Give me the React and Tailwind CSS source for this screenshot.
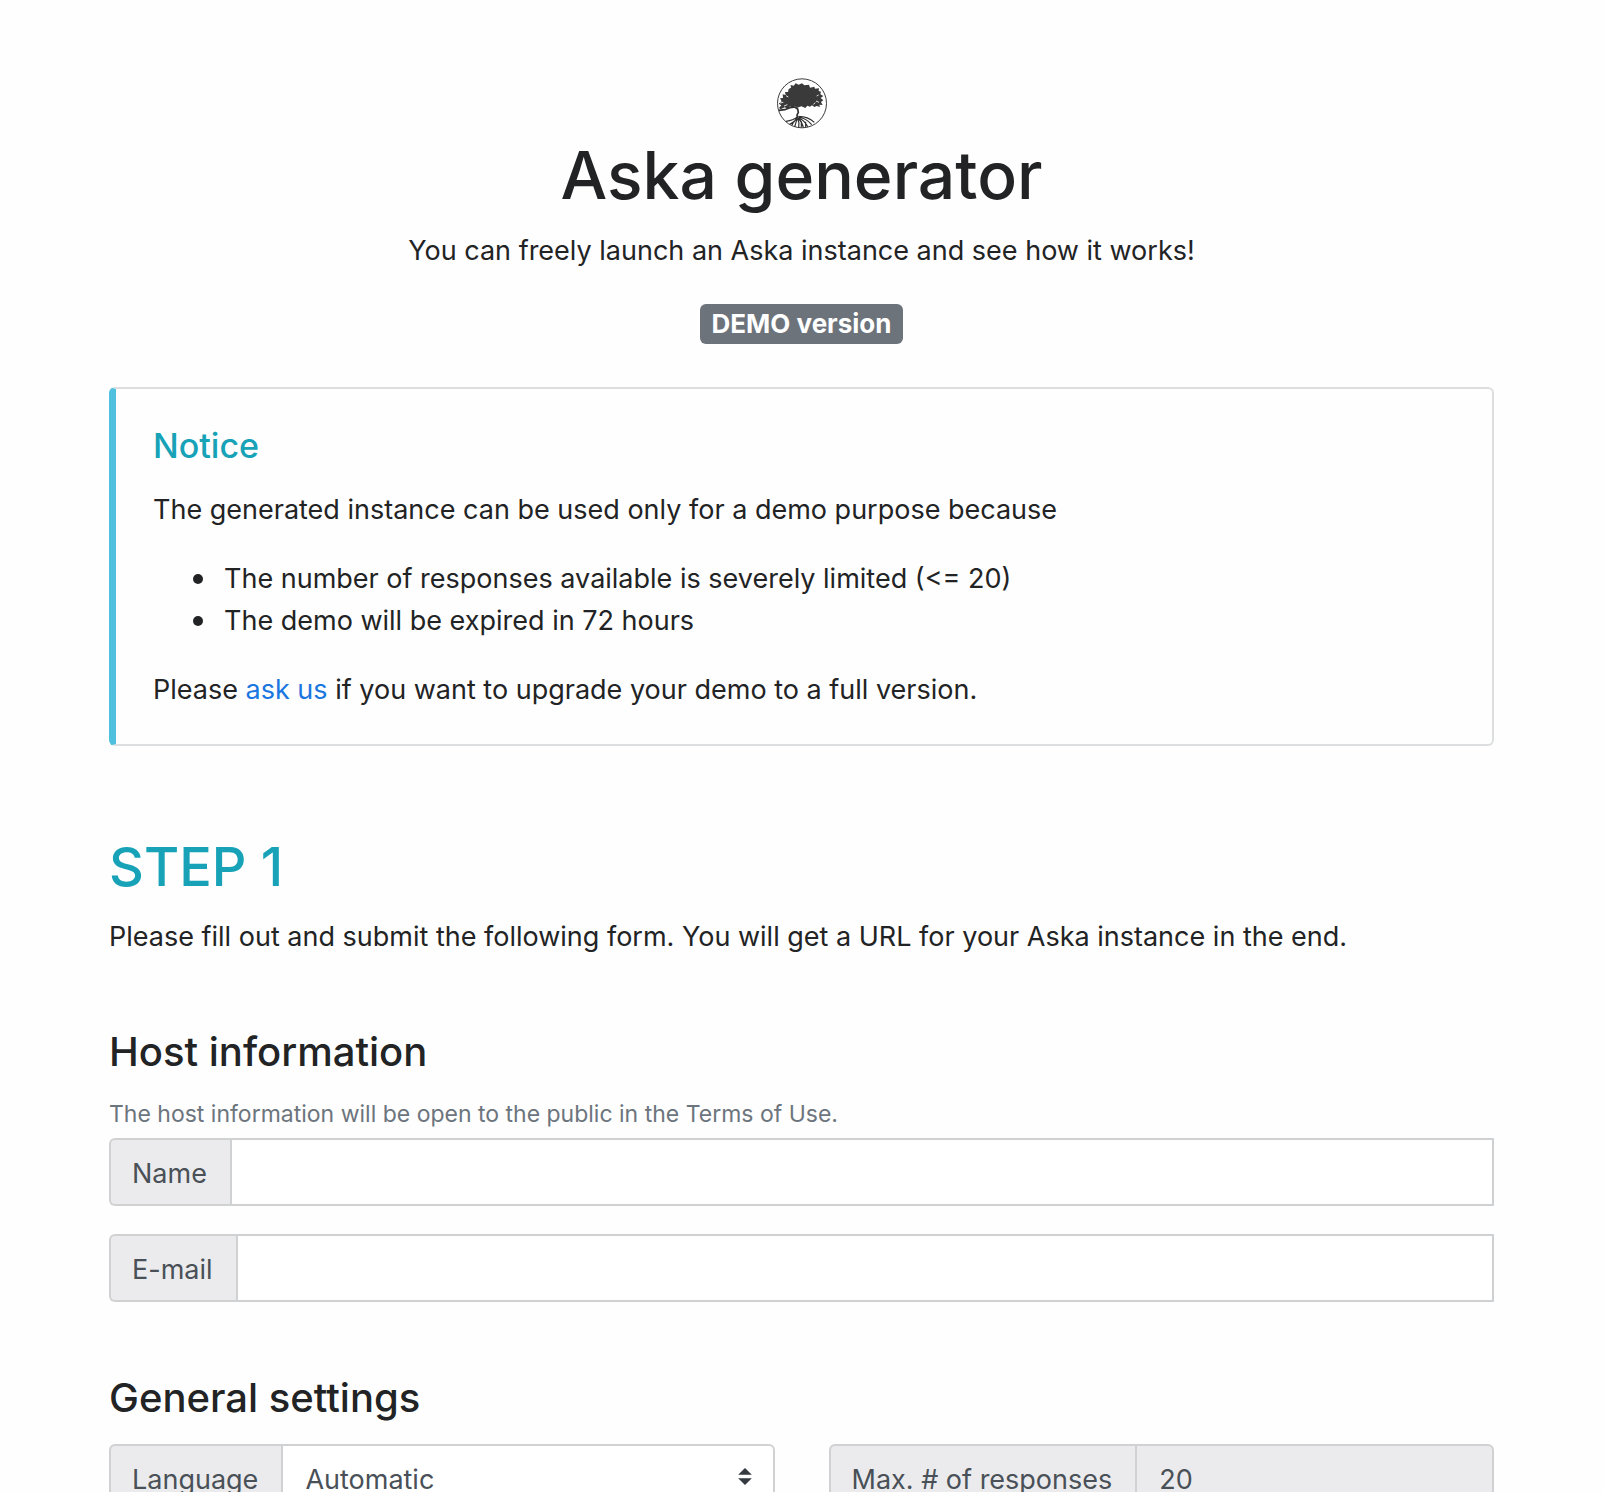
import React from "react";

function TreeLogo() {
  return (
    <svg viewBox="48 34 156 156" className="size-[52px]" role="img" aria-label="Aska logo">
      <circle cx="126" cy="113" r="73.5" fill="#fff" stroke="#3c3c3c" strokeWidth="3" />
      <path
        fill="#3a3a3a"
        d="M86 70L93 66 92 58 101 60 107 53 116 57 126 53 133 59 147 57 150 66 163 63 165 69 177 68 176 76 183 78 181 86 190 91 182 97 190 104 183 109 188 118 178 117 180 124 170 121 163 124 156 119 150 123 142 120 136 127 124 122 112 126 104 121 98 128 90 122 84 130 74 125 62 131 57 127 64 119 56 114 65 107 60 98 69 97 68 86 77 88 75 79 84 79z"
      />
      <path
        fill="none"
        stroke="#fff"
        strokeWidth="2.5"
        d="M60 112l10-2M72 121l10-4M168 106l9 4M160 116l6-5M78 90l7 4M176 88l-6 3"
      />
      <path
        fill="none"
        stroke="#2f2f2f"
        strokeWidth="5"
        strokeLinejoin="round"
        d="M57 134L74 132 90 126 104 124 113 130 115 140 111 148 113 158"
      />
      <path
        fill="none"
        stroke="#2f2f2f"
        strokeWidth="3.5"
        d="M112 154Q100 164 78 167M111 157Q104 170 89 176M112 158Q107 172 104 184M113 158Q119 172 116 186M114 157Q126 168 130 186M115 156Q134 164 143 183M115 154Q140 158 155 177M115 152Q144 152 163 170M102 166L96 179M124 167L124 185M137 168L137 184"
      />
    </svg>
  );
}

const addon =
  "flex shrink-0 items-center rounded-l-md border-2 border-r-0 border-[#d0d1d3] bg-[#ebebed] pt-1 pr-[23px] pl-[21px] text-[#495057]";
const field = "min-w-0 flex-1 border-2 border-[#d0d1d3] px-[22px] pt-1 text-[#495057] outline-none";
const bullet =
  "flex items-center gap-[21px] before:size-[10px] before:shrink-0 before:rounded-full before:bg-[#222324]";

function TextField({ id, label, type }) {
  return (
    <div className="flex h-[68px]">
      <label htmlFor={id} className={addon}>
        {label}
      </label>
      <input id={id} type={type} className={field + " bg-white"} />
    </div>
  );
}

export default function App() {
  return (
    <main className="bg-[#fefefe] pt-[77px] pr-[110px] pl-[109px] font-['Inter',sans-serif] text-[27px] leading-[42px] text-[#222324]">
      <header className="flex flex-col items-center text-center">
        <TreeLogo />
        <h1 className="mt-1 text-[66px] leading-[84px] font-medium">Aska generator</h1>
        <p className="mt-[13px]">You can freely launch an Aska instance and see how it works!</p>
        <span className="mt-8 rounded-md bg-[#6c737b] px-3 text-[26px] leading-[40px] font-bold text-white">
          DEMO version
        </span>
      </header>

      <section className="mt-[43px] rounded-md border-2 border-l-[7px] border-[#dcdee0] border-l-[#4fc0de] px-[37px] pt-9 pb-[33px]">
        <h2 className="mb-[22px] text-[34px] leading-[42px] font-medium text-[#17a2b8]">Notice</h2>
        <p>The generated instance can be used only for a demo purpose because</p>
        <ul className="my-[27px] pl-10">
          <li className={bullet}>The number of responses available is severely limited (&lt;= 20)</li>
          <li className={bullet}>The demo will be expired in 72 hours</li>
        </ul>
        <p>
          Please{" "}
          <a href="#contact" className="text-[#1a76e0]">
            ask us
          </a>{" "}
          if you want to upgrade your demo to a full version.
        </p>
      </section>

      <h2 className="mt-[87px] text-[54px] leading-[67px] font-medium text-[#17a2b8]">STEP 1</h2>
      <p className="mt-4">
        Please fill out and submit the following form. You will get a URL for your Aska instance in the end.
      </p>

      <form>
        <h3 className="mt-[69px] text-[40px] leading-[50px] font-medium">Host information</h3>
        <p className="mt-[21px] mb-[7px] text-[23px] leading-[33px] text-[#6c757d]">
          The host information will be open to the public in the Terms of Use.
        </p>
        <div className="flex flex-col gap-7">
          <TextField id="name" label="Name" type="text" />
          <TextField id="email" label="E-mail" type="email" />
        </div>

        <h3 className="mt-[71px] text-[40px] leading-[50px] font-medium">General settings</h3>
        <div className="mt-[21px] grid grid-cols-2 gap-[54px]">
          <div className="flex h-[68px]">
            <label htmlFor="language" className={addon}>
              Language
            </label>
            <div className="relative flex min-w-0 flex-1">
              <select
                id="language"
                defaultValue="auto"
                className={field + " appearance-none rounded-r-md bg-white"}
              >
                <option value="auto">Automatic</option>
              </select>
              <svg
                viewBox="0 0 4 5"
                className="pointer-events-none absolute top-6 right-[23px] h-[17px] w-[14px]"
                aria-hidden="true"
              >
                <path fill="#343a40" d="M2 0L0 2h4zm0 5L0 3h4z" />
              </svg>
            </div>
          </div>
          <div className="flex h-[68px]">
            <label htmlFor="max-responses" className={addon}>
              Max. # of responses
            </label>
            <input
              id="max-responses"
              type="text"
              readOnly
              value="20"
              className={field + " rounded-r-md bg-[#ebebed]"}
            />
          </div>
        </div>
      </form>
    </main>
  );
}
